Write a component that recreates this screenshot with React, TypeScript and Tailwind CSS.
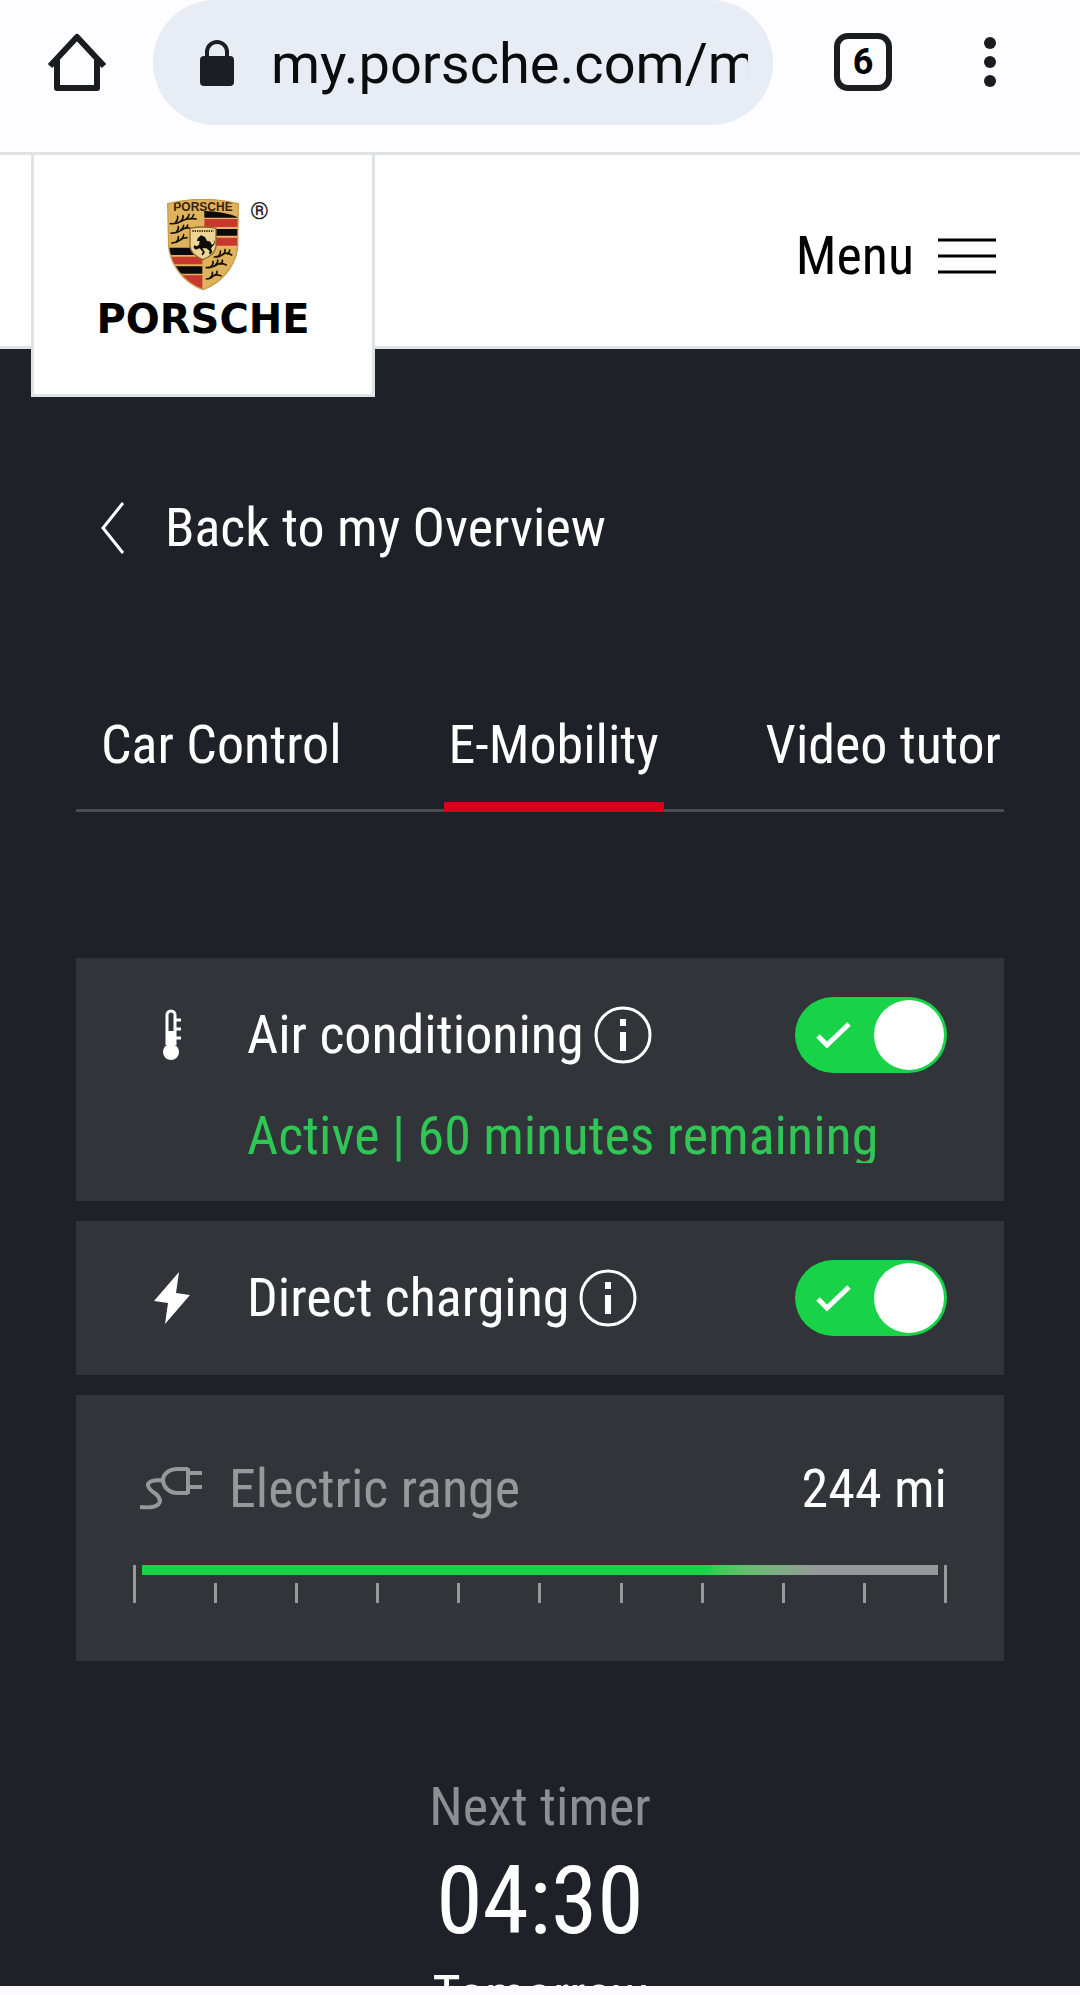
import React, { useState } from 'react';

const tabs = ['Car Control', 'E-Mobility', 'Video tutor'];

const antlers = ['M10 74q18 2 34-8t44-6', 'M12 102q16 2 30-8t28-6', 'M14 132q14 0 24-8t22-8', 'M142 174q16 0 26-8t26 2', 'M118 206q18 0 30-8t30 0', 'M118 240q14 0 20-8t24-2'];

const antlerTips = [
  'M26 70q8-10 6-18M42 66q8-8 6-16M58 60q8-6 8-14M72 59q6-4 8-12',
  'M28 99q8-8 6-16M42 93q8-6 8-14M54 88q8-4 8-10',
  'M28 129q8-8 6-16M42 121q8-6 8-14',
  'M154 172q8-8 6-16M168 166q8-6 6-14M182 165q6-4 6-12',
  'M132 203q8-8 6-16M146 197q8-6 6-14M160 195q8-4 6-12',
  'M130 236q8-6 6-16M144 229q8-6 6-12',
];

function Crest() {
  return (
    <svg viewBox="0 0 216 276" className="w-[72px] h-[92px]" aria-hidden="true">
      <defs>
        <clipPath id="shield">
          <path d="M2 14Q108-12 214 14L212 142C208 196 168 250 108 272C48 250 10 196 5 142Z" />
        </clipPath>
      </defs>
      <g clipPath="url(#shield)">
        <path d="M0 0H216V276H0Z" fill="#dfb35c" />
        <path d="M110 36Q170 34 216 54V146H110Z" fill="#e9b46a" />
        <path d="M112 36Q170 36 216 56H112Z" fill="#0c0a08" />
        <path d="M112 60H216V84H112Z" fill="#c8382c" />
        <path d="M112 90H216V110H112Z" fill="#0c0a08" />
        <path d="M112 116H216V140H112Z" fill="#c8382c" />
        <path d="M0 146H106V168H0Z" fill="#0c0a08" />
        <path d="M0 173H106V196H0Z" fill="#c8382c" />
        <path d="M0 202H106V224H0Z" fill="#0c0a08" />
        <path d="M0 229H106V276H0Z" fill="#c8382c" />
        <g fill="none" stroke="#1a1208" strokeWidth="5" strokeLinecap="round">
          {antlers.map((d) => (
            <path key={d} d={d} />
          ))}
          {antlerTips.map((d) => (
            <path key={d} d={d} />
          ))}
        </g>
        <text x="108" y="37" textAnchor="middle" fontSize="36" fontWeight="700" fontFamily="Liberation Sans" fill="#3b2208">
          PORSCHE
        </text>
      </g>
      <path d="M2 14Q108-12 214 14L212 142C208 196 168 250 108 272C48 250 10 196 5 142Z" fill="none" stroke="#c99a4a" strokeWidth="4" />
      <path d="M69 88Q108 80 147 88V142Q143 168 108 182Q73 168 69 142Z" fill="#ecd596" stroke="#8a662c" strokeWidth="4" />
      <path d="M76 96H140" stroke="#4a3210" strokeWidth="6" strokeDasharray="4 3" />
      <path
        d="M92 118L102 109L114 114L120 126Q132 124 134 138L140 134Q144 124 136 120Q146 124 142 136L132 148L136 158L130 166L126 164L128 156L118 148L106 148L114 160L106 170L104 164L108 160L98 148L86 152L80 146L82 138L88 142L96 138L98 126L90 126Z"
        fill="#100c06"
      />
    </svg>
  );
}

function InfoButton({ label }: { label: string }) {
  return (
    <button type="button" aria-label={label} className="ml-[10px] shrink-0">
      <svg viewBox="0 0 58 58" className="w-[58px] h-[58px]" fill="none">
        <circle cx="29" cy="29" r="27" stroke="white" strokeWidth="3" />
        <path d="M26 13H32V20H26ZM26 26H32V45H26Z" fill="white" />
      </svg>
    </button>
  );
}

function Toggle({ id }: { id: string }) {
  const [on, setOn] = useState(true);

  return (
    <span className="relative ml-auto block w-[152px] h-[76px] shrink-0">
      <input
        id={id}
        type="checkbox"
        role="switch"
        checked={on}
        onChange={() => setOn(!on)}
        className="peer block h-full w-full cursor-pointer appearance-none rounded-full bg-[#96989a] checked:bg-[#18d248]"
      />
      <svg viewBox="0 0 36 28" className="pointer-events-none absolute left-5 top-6 hidden h-7 w-9 peer-checked:block" fill="none">
        <path d="M3 15L12 24L34 3" stroke="white" strokeWidth="5" />
      </svg>
      <span className="pointer-events-none absolute left-1 top-[3px] h-[70px] w-[70px] rounded-full bg-white peer-checked:left-auto peer-checked:right-[3px]" />
    </span>
  );
}

function RangeScale() {
  return (
    <div className="mt-11 flex items-start justify-between">
      <span className="h-[38px] w-[3px] bg-[#96989a]" />
      <div className="flex-1">
        <div
          role="meter"
          aria-label="Electric range"
          aria-valuemin={0}
          aria-valuemax={100}
          aria-valuenow={80}
          className="mx-[6px] h-[10px] bg-linear-to-r from-[#18d248] from-71% to-[#96989a] to-85%"
        />
        <div className="mt-2 flex justify-evenly">
          {Array.from({ length: 9 }).map((_, i) => (
            <span key={i} className="h-5 w-[3px] bg-[#96989a]" />
          ))}
        </div>
      </div>
      <span className="h-[38px] w-[3px] bg-[#96989a]" />
    </div>
  );
}

export default function App() {
  const [active, setActive] = useState('E-Mobility');

  return (
    <div className="flex h-screen flex-col overflow-hidden bg-[#fdfdff] font-['Roboto_Condensed','Liberation_Sans_Narrow',Roboto,sans-serif] text-[54px] leading-[64px]">
      {/* Browser bar */}
      <div className="flex h-[152px] shrink-0 items-start pl-12 pr-[84px]">
        <button type="button" aria-label="Home" className="mt-8 shrink-0">
          <svg viewBox="0 0 58 60" className="h-[60px] w-[58px]" fill="none" stroke="#1b1c1f" strokeWidth="6">
            <path d="M2 34L29 5L56 34M9 28V56H49V28" strokeLinejoin="round" />
          </svg>
        </button>
        <div className="ml-[47px] flex h-[125px] min-w-0 flex-1 items-center rounded-[62px] bg-[#e8ecf4] pl-[46px] pr-[25px]">
          <svg viewBox="0 0 36 46" className="h-[46px] w-9 shrink-0" aria-hidden="true">
            <path d="M8 18V12a10 10 0 0 1 20 0V18" fill="none" stroke="#1b1f24" strokeWidth="4" />
            <rect x="1" y="16" width="34" height="30" rx="4" fill="#1b1f24" />
          </svg>
          <input
            aria-label="Address"
            defaultValue="my.porsche.com/main"
            className="ml-9 w-full min-w-0 bg-transparent pt-[2px] font-[Roboto] text-[56px] text-[#0b0c0e] outline-none"
          />
        </div>
        <button type="button" aria-label="Tabs" className="ml-[61px] mt-[33px] flex h-[58px] w-[58px] shrink-0 items-center justify-center rounded-[14px] border-[6px] border-[#1b1c1f] font-[Roboto] text-[36px] font-bold leading-none">
          6
        </button>
        <button type="button" aria-label="More" className="ml-[92px] mt-9 shrink-0">
          <svg viewBox="0 0 12 52" className="h-[52px] w-3" fill="#1b1c1f">
            <circle cx="6" cy="7" r="6" />
            <circle cx="6" cy="26" r="6" />
            <circle cx="6" cy="45" r="6" />
          </svg>
        </button>
      </div>

      {/* Site header */}
      <header className="z-10 flex h-[197px] shrink-0 items-start justify-between border-y-[3px] border-[#e0e3e5] bg-white pl-[31px] pr-[84px]">
        <a href="#" aria-label="Porsche" className="-mt-[3px] flex h-[245px] w-[344px] shrink-0 flex-col items-center border-[3px] border-[#e0e3e5] bg-white pt-11">
          <span className="relative">
            <Crest />
            <span className="absolute left-[83px] top-0 font-[Roboto] text-[24px] leading-6 text-[#222]">®</span>
          </span>
          <span className="mt-2 font-['DejaVu_Sans'] text-[40px] font-bold leading-10 text-black">PORSCHE</span>
        </a>
        <button type="button" className="mt-[69px] flex items-center gap-6 text-black">
          Menu
          <svg viewBox="0 0 58 36" className="h-9 w-[58px]" stroke="black" strokeWidth="3">
            <path d="M0 2H58M0 18H58M0 34H58" />
          </svg>
        </button>
      </header>

      <main className="min-h-0 flex-1 overflow-hidden bg-[#1e2128] px-[76px] pt-[147px] text-white">
        <a href="#" className="flex items-center pl-[25px]">
          <svg viewBox="0 0 24 52" className="h-[52px] w-6" fill="none" stroke="white" strokeWidth="3">
            <path d="M22 1L2 26L22 51" />
          </svg>
          <span className="ml-10">Back to my Overview</span>
        </a>

        <div role="tablist" className="mt-[153px] flex gap-[102px] overflow-hidden whitespace-nowrap pl-[25px] shadow-[inset_0_-3px_#4a4c50]">
          {tabs.map((tab) => (
            <button
              key={tab}
              type="button"
              role="tab"
              aria-selected={tab === active}
              onClick={() => setActive(tab)}
              className="min-w-[220px] shrink-0 border-b-[10px] border-transparent pb-[25px] aria-selected:border-[#d5001c]"
            >
              {tab}
            </button>
          ))}
        </div>

        <div className="mt-[146px] flex flex-col gap-5">
          <section className="bg-[#313439] px-[57px] pb-[38px] pt-[39px]">
            <div className="flex items-center">
              <svg viewBox="0 0 38 52" className="ml-5 h-[52px] w-[38px] shrink-0" fill="none" stroke="white">
                <path d="M14 36V6a4 4 0 0 1 8 0V36" strokeWidth="3" />
                <path d="M14 22H22V40H14Z" fill="white" stroke="none" />
                <circle cx="18" cy="43" r="8" fill="white" stroke="none" />
                <path d="M23 11H28M23 20H28M23 29H28" strokeWidth="3" />
              </svg>
              <label htmlFor="climate" className="ml-14">Air conditioning</label>
              <InfoButton label="About air conditioning" />
              <Toggle id="climate" />
            </div>
            <p className="mt-[31px] h-[59px] overflow-hidden whitespace-nowrap pl-[114px] text-[#2fc655]">Active | 60 minutes remaining</p>
          </section>

          <section className="flex items-center bg-[#313439] px-[57px] py-[39px]">
            <svg viewBox="0 0 38 52" className="ml-5 h-[52px] w-[38px] shrink-0" fill="white">
              <path d="M26 0L1 29L15 31L12 52L37 23L23 21Z" />
            </svg>
            <label htmlFor="charging" className="ml-14">Direct charging</label>
            <InfoButton label="About direct charging" />
            <Toggle id="charging" />
          </section>

          <section className="bg-[#313439] px-[57px] pb-[58px] pt-[62px]">
            <div className="flex items-center text-[#96989a]">
              <svg viewBox="0 0 64 46" className="ml-[7px] h-[46px] w-16 shrink-0" fill="none" stroke="currentColor" strokeWidth="4">
                <path d="M0 41C20 43 24 36 16 28C4 20 5 14 22 14M48 2V28M49 7H62M49 21H62M48 3H38C28 3 23 9 23 14C23 20 28 27 38 27H48" />
              </svg>
              <span className="ml-[25px]">Electric range</span>
              <span className="ml-auto text-white">244 mi</span>
            </div>
            <RangeScale />
          </section>
        </div>

        <div className="mt-[114px] text-center">
          <p className="text-[#8d8f93]">Next timer</p>
          <p className="text-[94px] leading-[124px]">04:30</p>
          <p>Tomorrow</p>
        </div>
      </main>
      <div className="h-[9px] shrink-0 bg-[#fdfaff]" />
    </div>
  );
}
